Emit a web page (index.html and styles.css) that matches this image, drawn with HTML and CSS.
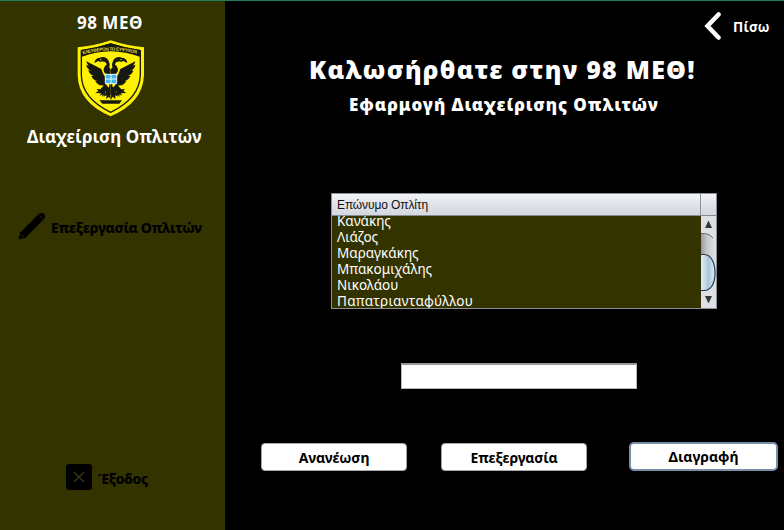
FILE: index.html
```html
<!DOCTYPE html>
<html lang="el">
<head>
<meta charset="utf-8">
<title>98 ΜΕΘ</title>
<link rel="stylesheet" href="styles.css">
</head>
<body>
<div class="app">
  <aside class="sidebar">
    <h2 class="unit">98 ΜΕΘ</h2>
    <svg class="emblem" viewBox="20 14 204 231">
      <path fill="#fff200" d="M22 36Q72 32 121 15Q171 32 221 36V120Q218 202 121 243Q24 202 22 120Z"/>
      <path fill="#fff200" stroke="#171811" stroke-width="4" d="M33 46Q80 40 121 26Q163 40 210 46V120Q207 190 121 231Q35 190 33 120Z"/>
      <path fill="#171811" d="M33 44Q80 38 121 24Q163 38 210 44V65Q165 49 121 48Q77 49 33 65Z"/>
      <path id="motto" fill="none" d="M38 57Q121 34 208 57"/>
      <text class="motto"><textPath href="#motto">ΕΛΕΥΘΕΡΟΝ ΤΟ ΕΥΨΥΧΟΝ</textPath></text>
      <g id="wing" fill="#171811">
        <path d="M121 116H107C96 108 99 94 109 88C108 80 99 77 91 80L84 77L72 83Q73 69 88 67Q105 61 114 75Q120 85 117 97L121 101V179L110 165L114 178L105 167L106 176L94 184L97 177L88 181L92 174L75 173L84 167L79 161L90 162L101 150C90 153 79 146 75 138L81 137C72 136 66 129 63 122L70 122C61 119 55 112 54 105L61 106C53 101 48 95 48 88L55 91Q48 84 48 78L93 101L99 117L105 125L108 150L116 157Z"/>
        <path d="M120 150L99 184L109 180L107 191L116 184L121 193Z"/>
      </g>
      <use href="#wing" transform="matrix(-1 0 0 1 243 0)"/>
      <circle cx="91" cy="73" r="2" fill="#fff200"/><circle cx="152" cy="73" r="2" fill="#fff200"/>
      <path fill="#42b5e8" d="M105 117H139V145H105Z"/>
      <path stroke="#e8faff" stroke-width="3" fill="none" d="M122 117V145M105 131H139M105 117H139V145H105Z"/>
      <path fill="#171811" d="M87 195H155L147 205H96Z"/>
    </svg>
    <h2 class="section">Διαχείριση Οπλιτών</h2>
    <a class="nav edit">
      <svg class="pencil" viewBox="0 0 30 30"><path d="M0.500 29.500L2.500 22L22.500 2Q25 0 28 2Q30 5 28 7.500L8 27.500Z"/><path class="detail" d="M22.500 3.500L26.500 7.500M3.500 24L6 26.500"/></svg>
      <span>Επεξεργασία Οπλιτών</span>
    </a>
    <a class="nav exit">
      <svg class="close" viewBox="0 0 26 26"><rect width="26" height="26" rx="3"/><path d="M8 8L18 18M18 8L8 18"/></svg>
      <span>Έξοδος</span>
    </a>
  </aside>
  <main class="content">
    <a class="back">
      <svg class="chevron" viewBox="0 0 18 28"><path d="M14.5 2.5L3.5 14L14.5 25.5"/></svg>
      <span>Πίσω</span>
    </a>
    <h1 class="title">Καλωσήρθατε στην 98 ΜΕΘ!</h1>
    <h3 class="subtitle">Εφαρμογή Διαχείρισης Οπλιτών</h3>
    <div class="table">
      <div class="thead"><span>Επώνυμο Οπλίτη</span><i></i></div>
      <div class="tbody">
        <ul class="rows">
          <li>Κανάκης</li><li>Λιάζος</li><li>Μαραγκάκης</li><li>Μπακομιχάλης</li><li>Νικολάου</li><li class="wide">Παπατριανταφύλλου</li>
        </ul>
        <svg class="scroll" viewBox="0 0 15 92">
          <defs>
            <linearGradient id="track"><stop offset="0" stop-color="#96989d"/><stop offset=".4" stop-color="#c5c6ca"/><stop offset="1" stop-color="#dedfe2"/></linearGradient>
            <linearGradient id="thumb"><stop offset="0" stop-color="#f1f6fa"/><stop offset=".35" stop-color="#c9dce9"/><stop offset=".6" stop-color="#a9c6da"/><stop offset="1" stop-color="#dcf1fc"/></linearGradient>
          </defs>
          <rect width="15" height="92" fill="#dfe0e5"/>
          <path fill="url(#track)" d="M0 17Q10 17 14 26V60H0Z"/>
          <path fill="none" stroke="#686a70" d="M0 17.5Q8 17 12 22"/>
          <path fill="url(#thumb)" stroke="#26384d" stroke-width="1.2" d="M-2 38.5H3C9 38.5 14 45 14 57C14 69 9 74.500 3 74.500H-2Z"/>
          <path fill="#35373c" d="M4 12L7.500 4.500L11 12ZM4 80L7.500 87.500L11 80Z"/>
        </svg>
      </div>
    </div>
    <input class="field" type="text">
    <div class="actions">
      <button class="b1">Ανανέωση</button>
      <button class="b2">Επεξεργασία</button>
      <button class="b3 focused">Διαγραφή</button>
    </div>
  </main>
</div>
</body>
</html>
```
FILE: styles.css
```css
* { box-sizing: border-box; }
body { margin: 0; background: #000; font-family: "Noto Sans", "Open Sans", sans-serif; }
h1, h2, h3, ul { margin: 0; padding: 0; white-space: nowrap; }
.app { display: flex; width: 784px; height: 530px; border-top: 1px solid #217b5d; overflow: hidden; }
.sidebar { width: 225px; height: 529px; background: #333300; display: flex; flex-direction: column; }
.unit, .section { color: #fff; font-weight: 700; font-size: 17px; line-height: 24px; }
.unit { margin: 10px 0 0 77px; letter-spacing: 0.5px; }
.emblem { width: 68px; height: 77px; margin: 5px 0 0 77px; }
.motto { font: bold 13.5px "Liberation Sans", sans-serif; fill: #e6d840; letter-spacing: -0.8px; }
.section { margin: 8px 0 0 27px; letter-spacing: 0.08px; }
.nav { display: flex; align-items: center; font-size: 14px; font-weight: 800; line-height: 20px; color: #000; white-space: nowrap; letter-spacing: -0.33px; }
.edit { margin: 62px 0 0 18px; height: 30px; }
.edit span { margin-top: 3px; }
.pencil { width: 28px; height: 28px; margin-right: 5px; }
.pencil .detail { stroke: #333300; stroke-width: 1; fill: none; }
.exit { margin: 223px 0 0 66px; height: 26px; }
.exit span { margin-top: 3px; }
.close { width: 26px; height: 26px; margin-right: 6px; }
.close path { stroke: #3b3a18; stroke-width: 1.2; }
.content { width: 559px; display: flex; flex-direction: column; align-items: flex-start; color: #fff; }
.back { display: flex; align-items: center; margin: 11px 0 0 479px; height: 28px; font-size: 13.5px; font-weight: 700; letter-spacing: 0.3px; }
.back span { margin-top: 2px; }
.chevron { width: 18px; height: 28px; margin-right: 11px; }
.chevron path { fill: none; stroke: #fff; stroke-width: 4.5; stroke-linecap: round; }
.title { font-size: 25px; font-weight: 900; line-height: 34px; margin: 12px 0 0 84px; letter-spacing: 1.23px; }
.subtitle { font-size: 17px; font-weight: 900; line-height: 24px; margin: 7px 0 0 124px; letter-spacing: 0.92px; }
.table { width: 386px; height: 116px; margin: 76px 0 0 106px; border: 1px solid #8d9096; }
.thead { height: 22px; display: flex; justify-content: space-between; background: linear-gradient(#f4f5f8, #dfe1e8 55%, #d5d7df); border-bottom: 1px solid #868a94; color: #111; font: 12px/22px "Liberation Sans", sans-serif; letter-spacing: -0.12px; padding-left: 5px; }
.thead i { width: 16px; border-left: 1px solid #8f929b; }
.tbody { height: 92px; display: flex; overflow: hidden; }
.rows { width: 369px; background: #333300; list-style: none; padding: 0 0 0 5px; margin-top: -3px; height: 95px; font-size: 13.5px; line-height: 16px; color: #fff; }
.wide { letter-spacing: 0.27px; }
.scroll { width: 15px; height: 92px; }
.field { display: block; width: 236px; height: 26px; margin: 54px 0 0 176px; border: 1px solid #b8b8b8; border-top: 2px solid #969799; background: #fff; padding: 2px 6px; outline: none; }
.actions { display: flex; align-items: flex-start; margin: 53px 0 0 36px; }
button { width: 146px; height: 28px; padding: 2px 0 0; background: #fff; border: 1px solid #a6a8ab; border-radius: 4px; color: #000; font: 700 14px/20px "Noto Sans", sans-serif; letter-spacing: -0.15px; white-space: nowrap; margin-top: 1px; }
.b2 { margin-left: 34px; }
.b3 { margin-left: 42px; }
.focused { width: 149px; height: 29px; padding: 0; margin-top: 0; border: 2px solid #7a90a8; border-radius: 5px; letter-spacing: 0; }
```
